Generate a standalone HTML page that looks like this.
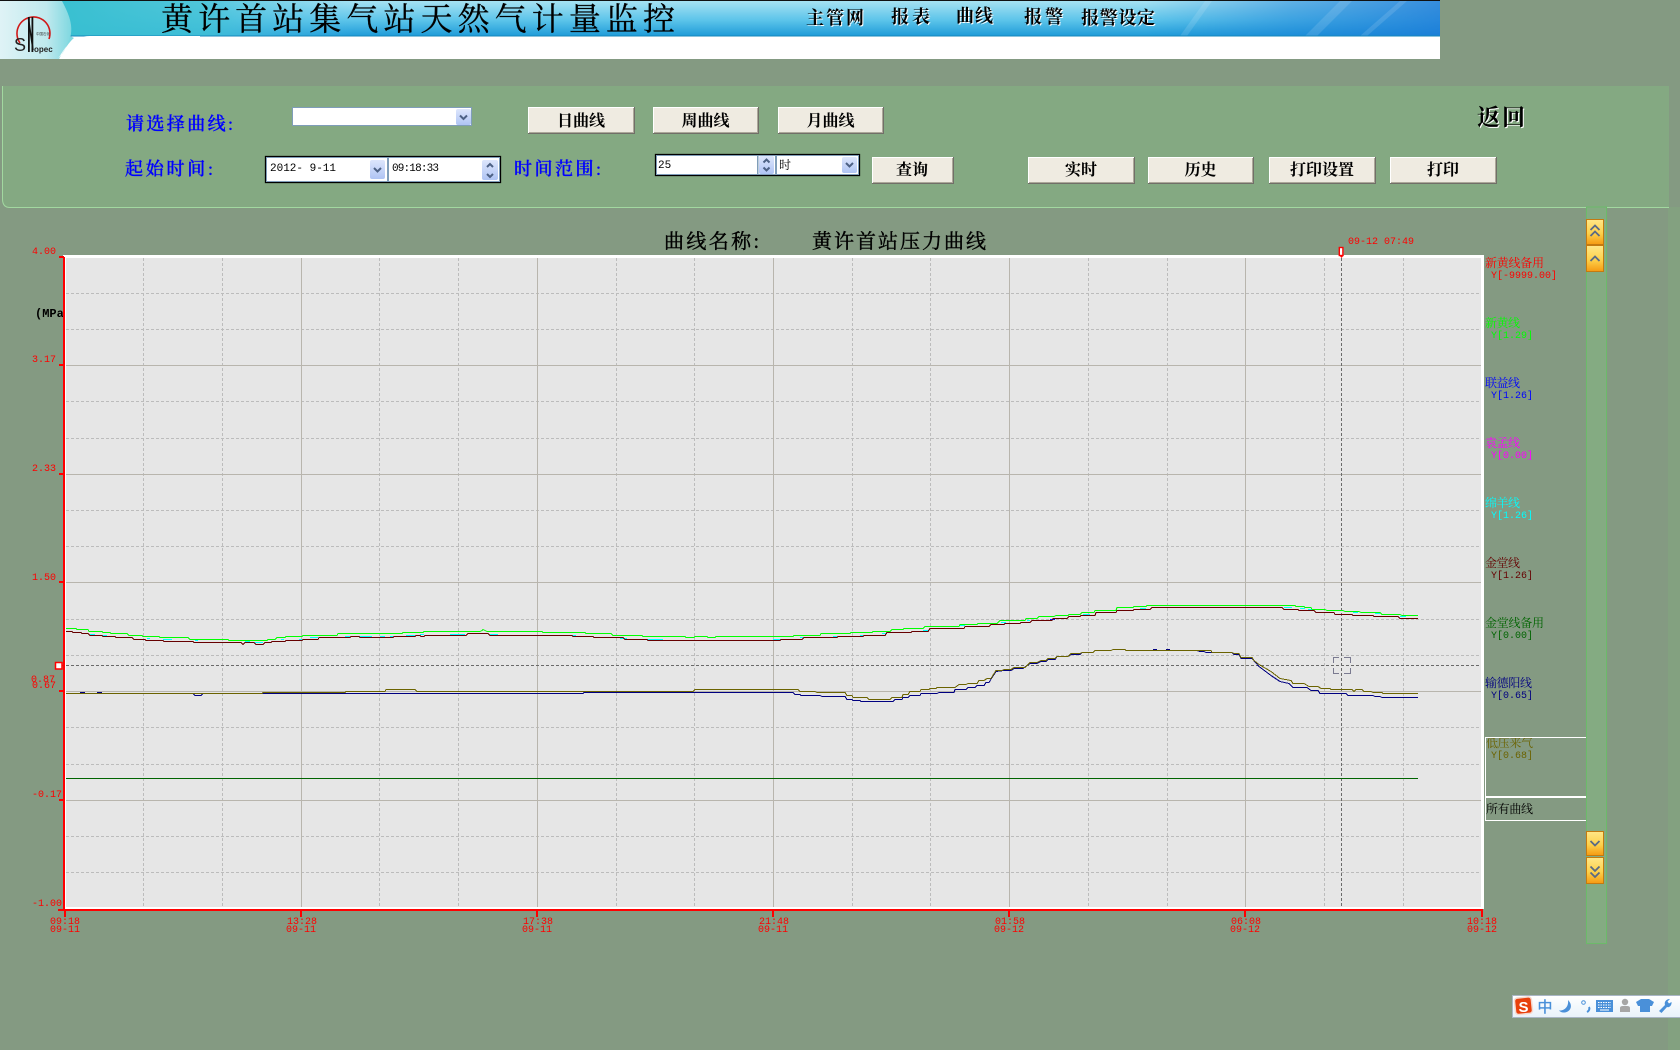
<!DOCTYPE html>
<html lang="zh"><head><meta charset="utf-8"><title>黄许首站压力曲线</title>
<style>
html,body{margin:0;padding:0;background:#849a82;width:1680px;height:1050px;overflow:hidden}
svg{position:absolute;left:0;top:0;display:block}
.cj{font-family:"Liberation Serif","Noto Serif CJK SC",serif}
.sn{font-family:"Liberation Sans","Noto Sans CJK SC",sans-serif}
.mo{font-family:"Liberation Mono",monospace;font-size:10px}
.lg{font-family:"Liberation Serif","Noto Serif CJK SC",serif;font-size:12px}
.btxt{font-family:"Liberation Serif","Noto Serif CJK SC",serif;font-weight:700;font-size:16px;fill:#000;text-anchor:middle}
.lab{font-family:"Liberation Serif","Noto Serif CJK SC",serif;font-size:18px;fill:#0000ff;font-weight:500;stroke:#0000ff;stroke-width:.35px}
polyline,path.c{fill:none;shape-rendering:crispEdges}
</style></head><body>
<svg width="1680" height="1050" viewBox="0 0 1680 1050" xmlns="http://www.w3.org/2000/svg">
<defs>
<linearGradient id="ban" x1="0" y1="0" x2="0" y2="1"><stop offset="0" stop-color="#a6e2f2"/><stop offset=".55" stop-color="#5cc4ea"/><stop offset="1" stop-color="#1e9bd8"/></linearGradient>
<linearGradient id="banR" x1="0" y1="0" x2="1" y2="0"><stop offset="0" stop-color="#fff" stop-opacity="0"/><stop offset=".6" stop-color="#1a80d8" stop-opacity="0"/><stop offset=".8" stop-color="#1a80d8" stop-opacity=".5"/><stop offset="1" stop-color="#1a78d8" stop-opacity=".8"/></linearGradient>
<linearGradient id="banL" x1="0" y1="0" x2="1" y2="0"><stop offset="0" stop-color="#dff3f6"/><stop offset=".65" stop-color="#c0e9ee"/><stop offset="1" stop-color="#7fd8e0"/></linearGradient>
<linearGradient id="teal" x1="0" y1="0" x2="1" y2="0"><stop offset="0" stop-color="#38bfd0"/><stop offset=".5" stop-color="#42c2d6" stop-opacity=".85"/><stop offset="1" stop-color="#5cc4ea" stop-opacity="0"/></linearGradient>
<linearGradient id="org" x1="0" y1="0" x2="0" y2="1"><stop offset="0" stop-color="#ffe788"/><stop offset=".55" stop-color="#fdd14c"/><stop offset="1" stop-color="#f59a12"/></linearGradient>
<linearGradient id="blu" x1="0" y1="0" x2="0" y2="1"><stop offset="0" stop-color="#dde6fc"/><stop offset="1" stop-color="#afc4f4"/></linearGradient>
<linearGradient id="try" x1="0" y1="0" x2="0" y2="1"><stop offset="0" stop-color="#fff"/><stop offset="1" stop-color="#e8f2fa"/></linearGradient>
</defs>

<!-- banner -->
<rect x="0" y="0" width="1440" height="59" fill="#fff"/>
<rect x="0" y="1" width="1440" height="35" fill="url(#ban)"/>
<rect x="700" y="1" width="740" height="35" fill="url(#banR)"/>
<rect x="55" y="1" width="300" height="35" fill="url(#teal)"/>
<path d="M1180 36L1205 1H1212L1187 36ZM1305 36L1340 1H1352L1317 36ZM1360 36L1400 1H1407L1367 36Z" fill="#fff" fill-opacity=".12"/>
<rect x="0" y="0" width="1440" height="1" fill="#111"/>
<rect x="0" y="35.500" width="1440" height="1" fill="#1587bb"/>
<path d="M0 1H62C72 20 78 36 58 59H0Z" fill="url(#banL)"/>
<path d="M58 59C66 46 72 36 90 36H200V59Z" fill="#fff"/>
<path d="M59 59C64 50 69 42 74 38L70 36C68 45 64 52 58 59Z" fill="#7fd8e0"/>
<path d="M20 43A16.500 16.500 0 1 1 49 39" fill="none" stroke="#d01818" stroke-width="1.600"/>
<rect x="28" y="17" width="1.800" height="35" fill="#111"/><rect x="31.500" y="17" width="1.800" height="35" fill="#111"/>
<path d="M28.500 19L33 50" stroke="#111" stroke-width="1.500"/>
<text x="14" y="51" class="sn" font-size="18" fill="#222">S</text>
<text x="34" y="52" class="sn" font-size="8" fill="#222" font-weight="700">opec</text>
<text x="36" y="35" class="sn" font-size="3.500" fill="#333">中国石化</text>
<text x="161" y="30" class="cj" font-size="32" fill="#000" stroke="#000" stroke-width=".3" textLength="514" lengthAdjust="spacing">黄许首站集气站天然气计量监控</text>
<g class="cj" font-size="18" font-weight="700" fill="#000">
<g fill="#fff" transform="translate(1 1)">
<text x="806" y="24" textLength="58">主管网</text><text x="891" y="23" textLength="39">报表</text><text x="956" y="22" textLength="37">曲线</text><text x="1024" y="23" textLength="39">报警</text><text x="1081" y="24" textLength="74">报警设定</text></g>
<text x="806" y="24" textLength="58">主管网</text><text x="891" y="23" textLength="39">报表</text><text x="956" y="22" textLength="37">曲线</text><text x="1024" y="23" textLength="39">报警</text><text x="1081" y="24" textLength="74">报警设定</text>
</g>

<!-- panel -->
<rect x="1668" y="207" width="12" height="843" fill="#83a180"/>
<path d="M2 86H1669V207H10Q2 207 2 199Z" fill="#84a982"/>
<path d="M2.500 86V199Q2.500 207.500 10 207.500H1669" fill="none" stroke="#a2d8a0" stroke-width="1"/>
<text x="126" y="130" class="lab" textLength="107">请选择曲线:</text>
<text x="125" y="175" class="lab" textLength="88">起始时间:</text>
<text x="514" y="175" class="lab" textLength="87">时间范围:</text>

<!-- combo 1 -->
<rect x="292.500" y="107.500" width="179" height="18" fill="#fff" stroke="#7f9db9"/>
<rect x="456" y="109" width="15" height="16" rx="2" fill="url(#blu)"/>
<path d="M460 115.500L463.500 119L467 115.500" fill="none" stroke="#4d6185" stroke-width="2"/>

<!-- date box -->
<rect x="265.500" y="156.500" width="235" height="26" fill="#fff" stroke="#000" stroke-width="1.300"/>
<rect x="266.500" y="157.500" width="233" height="24" fill="#fff" stroke="#7f9db9"/>
<rect x="387" y="157" width="2" height="25" fill="#7f9db9"/>
<text x="270" y="171" class="mo" fill="#000" style="font-size:11px" textLength="66">2012- 9-11</text>
<text x="392" y="171" class="mo" fill="#000" style="font-size:11px" textLength="47">09:18:33</text>
<rect x="370" y="160" width="15" height="19" rx="2" fill="url(#blu)"/>
<path d="M374 168L377.500 171.500L381 168" fill="none" stroke="#4d6185" stroke-width="2"/>
<rect x="482" y="160" width="16" height="20" rx="2" fill="url(#blu)"/>
<path d="M487 167L490 164L493 167M487 174L490 177L493 174" fill="none" stroke="#4d6185" stroke-width="2"/>

<!-- range box -->
<rect x="655.500" y="154.500" width="204" height="21" fill="#fff" stroke="#000" stroke-width="1.300"/>
<rect x="656.500" y="155.500" width="202" height="19" fill="#fff" stroke="#7f9db9"/>
<rect x="757" y="155" width="1.500" height="20" fill="#7f9db9"/><rect x="775" y="155" width="2" height="20" fill="#7f9db9"/>
<rect x="759" y="156" width="15" height="18" rx="2" fill="url(#blu)"/>
<path d="M763.500 162.500L766.500 159.500L769.500 162.500M763.500 167.500L766.500 170.500L769.500 167.500" fill="none" stroke="#4d6185" stroke-width="2"/>
<text x="658" y="168" class="mo" fill="#000" style="font-size:11px">25</text>
<text x="779" y="169" class="lg" fill="#000">时</text>
<rect x="842" y="157" width="15" height="16" rx="2" fill="url(#blu)"/>
<path d="M846 163L849.500 166.500L853 163" fill="none" stroke="#4d6185" stroke-width="2"/>

<!-- buttons -->
<g id="btns">
<g fill="#efebe1" stroke="none">
<rect x="528" y="107" width="106" height="27"/><rect x="653" y="107" width="105" height="27"/><rect x="778" y="107" width="105" height="27"/><rect x="872" y="157" width="81" height="27"/><rect x="1028" y="157" width="106" height="27"/><rect x="1148" y="157" width="105" height="27"/><rect x="1269" y="157" width="106" height="27"/><rect x="1390" y="157" width="106" height="27"/>
</g>
<path class="c" stroke="#fff" d="M528.500 133V107.500H634M653.500 133V107.500H758M778.500 133V107.500H883M872.500 183V157.500H953M1028.500 183V157.500H1134M1148.500 183V157.500H1253M1269.500 183V157.500H1375M1390.500 183V157.500H1496"/>
<path class="c" stroke="#aca899" d="M529 132.500H633.500V108M654 132.500H757.500V108M779 132.500H882.500V108M873 182.500H952.500V158M1029 182.500H1133.500V158M1149 182.500H1252.500V158M1270 182.500H1374.500V158M1391 182.500H1495.500V158"/>
<path class="c" stroke="#716f68" d="M528 133.500H634.500V107M653 133.500H758.500V107M778 133.500H883.500V107M872 183.500H953.500V157M1028 183.500H1134.500V157M1148 183.500H1253.500V157M1269 183.500H1375.500V157M1390 183.500H1496.500V157"/>
</g>
<text x="581" y="126" class="btxt">日曲线</text><text x="705.500" y="126" class="btxt">周曲线</text><text x="830.500" y="126" class="btxt">月曲线</text>
<text x="912" y="175" class="btxt">查询</text><text x="1081" y="175" class="btxt">实时</text><text x="1200.500" y="175" class="btxt">历史</text><text x="1322" y="175" class="btxt">打印设置</text><text x="1443" y="175" class="btxt">打印</text>
<g class="cj" font-size="23" font-weight="700">
<text x="1478" y="126" fill="#fff" textLength="48">返回</text>
<text x="1477" y="125" fill="#000" textLength="48">返回</text></g>

<!-- chart title -->
<text x="664" y="248" class="cj" font-size="20" fill="#000" stroke="#000" stroke-width=".4" textLength="95">曲线名称:</text>
<text x="812" y="248" class="cj" font-size="20" fill="#000" stroke="#000" stroke-width=".4" textLength="174">黄许首站压力曲线</text>

<!-- plot -->
<rect x="63" y="255" width="1421" height="654" fill="#fff"/>
<rect x="66" y="258" width="1415" height="649" fill="#e6e6e6"/>
<path class="c" stroke="#bcbcbc" stroke-dasharray="3 2" d="M143.500 258V907M222.500 258V907M379.500 258V907M458.500 258V907M616.500 258V907M694.500 258V907M852.500 258V907M930.500 258V907M1088.500 258V907M1167.500 258V907M1324.500 258V907M1403.500 258V907"/>
<path class="c" stroke="#bcbcbc" stroke-dasharray="3 2" d="M66 293.500H1479M66 329.500H1479M66 401.500H1479M66 438.500H1479M66 510.500H1479M66 546.500H1479M66 619.500H1479M66 655.500H1479M66 727.500H1479M66 764.500H1479M66 836.500H1479M66 872.500H1479"/>
<path class="c" stroke="#b8b5ad" d="M66 365.500H1481M66 474.500H1481M66 582.500H1481M66 691.500H1481M66 800.500H1481M301.500 258V907M537.500 258V907M773.500 258V907M1009.500 258V907M1245.500 258V907"/>
<path class="c" stroke="#6a6a6a" stroke-dasharray="3 2" d="M66 665.500H1481M1341.500 258V907"/>

<!-- curves -->
<path class="c" stroke="#00ffff" d="M90 634.500H95M102 635.500H107M135 635.500H138M147 638.500H150M163 639.500H172M195 640.500H198M245 641.500H250M255 642.500H263M281 639.500H284M299 639.500H302M310 637.500H318M345 636.500H350M359 636.500H372M380 636.500H385M390 636.500H393M406 635.500H415M420 634.500H424M450 634.500H465M490 634.500H498M572 635.500H576M620 638.500H627M647 639.500H663M773 639.500H782M800 637.500H805M833 636.500H837M860 635.500H863M882 633.500H887M894 632.500H905M923 630.500H928M937 628.500H948M960 625.500H965M1001 622.500H1006M1027 620.500H1030M1083 614.500H1090M1140 608.500H1146M1284 607.500H1292M1300 608.500H1305M1308 609.500H1313M1353 612.500H1358M1375 613.500H1380M1400 616.500H1406"/>
<path class="c" stroke="#0000ff" d="M972 626.500H977M1050 619.500H1055M1140 609.500H1146M493 635.500H496"/>
<polyline stroke="#00ff00" points="66,628.500 76,628.500 77,629.500 88,629.500 89,631.500 102,631.500 103,632.500 110,632.500 111,633.500 127,633.500 129,635.500 142,635.500 143,636.500 159,636.500 160,637.500 188,637.500 190,639.500 228,639.500 229,640.500 267,640.500 268,639.500 275,639.500 277,637.500 285,637.500 286,636.500 302,636.500 303,635.500 337,635.500 338,633.500 402,633.500 403,632.500 423,632.500 424,631.500 480,631.500 482,630.500 483,629.500 485,630.500 487,631.500 542,631.500 543,632.500 585,632.500 586,633.500 611,633.500 613,635.500 642,635.500 643,636.500 685,636.500 686,637.500 694,637.500 695,636.500 707,636.500 708,637.500 715,637.500 716,636.500 793,636.500 794,635.500 820,635.500 821,633.500 850,633.500 851,632.500 872,632.500 873,631.500 890,631.500 892,629.500 903,629.500 904,628.500 923,628.500 925,626.500 959,626.500 960,624.500 977,624.500 978,623.500 997,623.500 1000,620.500 1025,620.500 1026,618.500 1037,618.500 1039,616.500 1054,616.500 1056,615.500 1068,615.500 1069,614.500 1080,614.500 1082,612.500 1094,612.500 1095,610.500 1116,610.500 1117,607.500 1133,607.500 1134,606.500 1146,606.500 1147,605.500 1295,605.500 1296,606.500 1304,606.500 1305,607.500 1311,607.500 1312,609.500 1325,609.500 1327,610.500 1343,610.500 1345,611.500 1359,611.500 1361,612.500 1380,612.500 1382,614.500 1400,614.500 1402,615.500 1418,615.500"/>
<polyline stroke="#660000" points="66,631.500 72,631.500 73,632.500 81,632.500 82,633.500 88,633.500 90,635.500 102,635.500 103,636.500 115,636.500 116,637.500 132,637.500 134,639.500 145,639.500 146,640.500 163,640.500 164,641.500 193,641.500 194,642.500 241,642.500 243,644.500 245,642.500 254,642.500 256,644.500 263,644.500 265,642.500 271,642.500 272,641.500 285,641.500 286,640.500 302,640.500 303,639.500 318,639.500 319,637.500 350,637.500 351,636.500 359,636.500 360,637.500 393,637.500 394,636.500 415,636.500 416,635.500 420,635.500 421,636.500 424,636.500 425,635.500 466,635.500 468,633.500 488,633.500 490,635.500 572,635.500 573,636.500 593,636.500 594,637.500 623,637.500 625,639.500 647,639.500 648,640.500 780,640.500 781,639.500 802,639.500 804,637.500 837,637.500 838,636.500 863,636.500 864,635.500 885,635.500 887,632.500 911,632.500 912,631.500 928,631.500 930,628.500 964,628.500 965,626.500 989,626.500 991,624.500 1004,624.500 1005,623.500 1020,623.500 1021,622.500 1030,622.500 1032,620.500 1052,620.500 1053,618.500 1067,618.500 1069,616.500 1080,616.500 1081,615.500 1095,615.500 1096,612.500 1116,612.500 1117,610.500 1133,610.500 1134,609.500 1150,609.500 1152,607.500 1282,607.500 1284,609.500 1298,609.500 1299,610.500 1314,610.500 1316,612.500 1334,612.500 1335,614.500 1352,614.500 1353,615.500 1373,615.500 1374,616.500 1398,616.500 1400,618.500 1418,618.500"/>
<polyline stroke="#000080" points="66,693.500 193,693.500 195,695.500 201,695.500 203,693.500 583,693.500 584,692.500 793,692.500 795,694.500 800,694.500 801,695.500 820,695.500 822,696.500 845,696.500 847,699.500 852,699.500 853,700.500 860,700.500 861,701.500 893,701.500 895,699.500 902,699.500 903,697.500 908,697.500 910,695.500 920,695.500 921,693.500 937,693.500 939,692.500 954,692.500 955,689.500 966,689.500 968,687.500 975,687.500 977,685.500 984,685.500 986,682.500 989,682.500 992,677.500 996,671.500 1004,670.500 1011,670.500 1014,668.500 1023,668.500 1027,665.500 1030,663.500 1037,663.500 1041,661.500 1046,661.500 1048,659.500 1055,659.500 1057,656.500 1068,656.500 1071,654.500 1080,654.500 1082,652.500 1093,652.500 1095,650.500 1111,650.500 1113,649.500 1125,649.500 1126,650.500 1197,650.500 1200,651.500 1204,651.500 1206,652.500 1232,652.500 1234,654.500 1239,654.500 1241,658.500 1252,658.500 1259,666.500 1271,675.500 1280,681.500 1289,683.500 1293,687.500 1307,687.500 1311,690.500 1318,690.500 1320,693.500 1346,693.500 1348,695.500 1373,695.500 1375,696.500 1380,696.500 1382,697.500 1418,697.500"/>
<path class="c" stroke="#000080" d="M80 692.500H85M97 692.500H102M1153 649.500H1157M1166 649.500H1170M1199 651.500H1204"/>
<polyline stroke="#6b6300" points="66,693.500 262,693.500 263,692.500 345,692.500 346,691.500 385,691.500 386,689.500 415,689.500 417,691.500 693,691.500 695,689.500 798,689.500 800,691.500 815,691.500 817,692.500 845,692.500 847,695.500 852,695.500 853,697.500 867,697.500 869,699.500 890,699.500 892,697.500 902,697.500 903,694.500 908,694.500 910,691.500 920,691.500 921,689.500 929,689.500 930,688.500 936,688.500 937,687.500 955,687.500 959,684.500 966,684.500 968,683.500 977,683.500 979,680.500 984,680.500 987,678.500 991,678.500 996,670.500 1002,670.500 1004,669.500 1011,669.500 1014,667.500 1025,667.500 1027,665.500 1030,662.500 1037,662.500 1041,660.500 1046,660.500 1048,658.500 1055,658.500 1057,656.500 1068,656.500 1071,653.500 1080,653.500 1082,652.500 1093,652.500 1095,650.500 1111,650.500 1113,649.500 1125,649.500 1126,650.500 1211,650.500 1212,652.500 1232,652.500 1234,653.500 1239,653.500 1241,657.500 1252,657.500 1254,660.500 1259,664.500 1271,671.500 1280,678.500 1291,680.500 1293,683.500 1304,683.500 1309,686.500 1318,686.500 1321,688.500 1330,688.500 1331,689.500 1352,689.500 1354,691.500 1356,689.500 1362,689.500 1364,691.500 1371,691.500 1373,692.500 1382,692.500 1383,693.500 1418,693.500"/>
<path class="c" stroke="#006400" d="M66 778.500H1418"/>

<!-- cursor marker -->
<path class="c" stroke="#7a7a90" stroke-width="1" d="M1333.500 663V657.500H1339M1344 657.500H1350.500V663M1350.500 668V673.500H1344M1339 673.500H1333.500V668"/>

<!-- axes -->
<rect x="63" y="257" width="2" height="654" fill="#f00"/>
<rect x="58" y="909" width="1425" height="2" fill="#f00"/>
<rect x="1481" y="909" width="2" height="8" fill="#f00"/>
<g fill="#f00">
<rect x="59" y="256" width="5" height="2"/><rect x="59" y="364" width="5" height="2"/><rect x="59" y="473" width="5" height="2"/><rect x="59" y="581" width="5" height="2"/><rect x="59" y="690" width="5" height="2"/><rect x="59" y="799" width="5" height="2"/>
<rect x="64" y="909" width="2" height="8"/><rect x="300" y="909" width="2" height="8"/><rect x="536" y="909" width="2" height="8"/><rect x="772" y="909" width="2" height="8"/><rect x="1008" y="909" width="2" height="8"/><rect x="1244" y="909" width="2" height="8"/>
</g>
<rect x="55.500" y="662.500" width="6.500" height="6.500" fill="#fff" stroke="#f00" stroke-width="1.500"/>
<rect x="62" y="665" width="2" height="1" fill="#f00"/>
<rect x="1339.300" y="247.500" width="3.600" height="8" fill="#fff" stroke="#f00" stroke-width="1.400"/>
<path d="M1339 255H1344L1341.500 258Z" fill="#f00"/>

<!-- axis labels -->
<g class="mo" fill="#f00">
<text x="32" y="254">4.00</text><text x="32" y="362">3.17</text><text x="32" y="471">2.33</text><text x="32" y="580">1.50</text>
<text x="31" y="682">0.87</text><text x="32" y="688">0.67</text><text x="32" y="797">-0.17</text><text x="32" y="906">-1.00</text>
<text x="50" y="924">09:18</text><text x="50" y="932">09-11</text>
<text x="287" y="924">13:28</text><text x="286" y="932">09-11</text>
<text x="523" y="924">17:38</text><text x="522" y="932">09-11</text>
<text x="759" y="924">21:48</text><text x="758" y="932">09-11</text>
<text x="995" y="924">01:58</text><text x="994" y="932">09-12</text>
<text x="1231" y="924">06:08</text><text x="1230" y="932">09-12</text>
<text x="1467" y="924">10:18</text><text x="1467" y="932">09-12</text>
<text x="1348" y="244">09-12 07:49</text>
</g>
<svg x="30" y="300" width="33" height="26" overflow="hidden"><text x="5" y="17" font-family="Liberation Mono,monospace" font-weight="700" font-size="12" fill="#000">(MPa</text></svg>

<!-- legend -->
<g class="lg">
<text x="1485" y="267" fill="#f00" textLength="59">新黄线备用</text>
<text x="1485" y="327" fill="#0f0" textLength="35">新黄线</text>
<text x="1485" y="387" fill="#00f" textLength="35">联益线</text>
<text x="1485" y="447" fill="#f0f" textLength="35">袁孟线</text>
<text x="1485" y="507" fill="#0ff" textLength="35">绵羊线</text>
<text x="1485" y="567" fill="#660000" textLength="35">金堂线</text>
<text x="1485" y="627" fill="#006400" textLength="59">金堂线备用</text>
<text x="1485" y="687" fill="#000080" textLength="47">输德阳线</text>
<text x="1486" y="747" fill="#6b6300" textLength="47">低压来气</text>
<text x="1486" y="813" fill="#000" textLength="47">所有曲线</text>
</g>
<g class="mo">
<text x="1491" y="278" fill="#f00">Y[-9999.00]</text>
<text x="1491" y="338" fill="#0f0">Y[1.29]</text>
<text x="1491" y="398" fill="#00f">Y[1.26]</text>
<text x="1491" y="458" fill="#f0f">Y[0.00]</text>
<text x="1491" y="518" fill="#0ff">Y[1.26]</text>
<text x="1491" y="578" fill="#660000">Y[1.26]</text>
<text x="1491" y="638" fill="#006400">Y[0.00]</text>
<text x="1491" y="698" fill="#000080">Y[0.65]</text>
<text x="1491" y="758" fill="#6b6300">Y[0.68]</text>
</g>
<path class="c" stroke="#fff" d="M1586 737.500H1485.500V820.500H1586M1485 796.500H1586M1485 797.500H1586"/>

<!-- scroll strip -->
<rect x="1586.500" y="207" width="20" height="736.500" fill="#84ab82" stroke="#6cba6a"/>
<g stroke="#c47a10" fill="url(#org)">
<rect x="1586.500" y="219.500" width="17" height="25"/><rect x="1586.500" y="245.500" width="17" height="26"/>
<rect x="1586.500" y="831.500" width="17" height="24"/><rect x="1586.500" y="857.500" width="17" height="26"/>
</g>
<g fill="none" stroke="#5a6a85" stroke-width="1.800">
<path d="M1590.500 230L1595 225.500L1599.500 230M1590.500 236L1595 231.500L1599.500 236"/>
<path d="M1590.500 261L1595 256.500L1599.500 261"/>
<path d="M1590.500 841L1595 845.500L1599.500 841"/>
<path d="M1590.500 866.500L1595 871L1599.500 866.500M1590.500 872.500L1595 877L1599.500 872.500"/>
</g>

<!-- tray -->
<rect x="1512.500" y="995.500" width="168" height="22" fill="url(#try)" stroke="#a9b6c5"/>
<rect x="1515" y="997.500" width="17" height="16.500" rx="3" transform="rotate(-6 1523 1006)" fill="#e8400c" stroke="#f4d9d0" stroke-width="1.500"/>
<text x="1523.500" y="1012" font-family="Liberation Sans,sans-serif" font-weight="700" font-size="15" fill="#fff" text-anchor="middle">S</text>
<text x="1545" y="1012" class="sn" font-size="15" fill="#4a90d9" stroke="#4a90d9" stroke-width=".3" text-anchor="middle">中</text>
<path d="M1568 1000C1574 1006 1570 1013 1563 1012.500C1561 1012.300 1560 1011.500 1559 1010.500C1564 1011 1569 1007 1568 1000Z" fill="#4a90d9"/>
<circle cx="1583.500" cy="1002.500" r="1.800" fill="none" stroke="#4a90d9" stroke-width="1"/>
<path d="M1589 1007C1590 1009 1589 1011 1587 1012" fill="none" stroke="#4a90d9" stroke-width="2"/>
<rect x="1596" y="1000" width="17" height="12" fill="#4a90d9"/>
<path d="M1598 1002.500H1611M1598 1005H1611M1598 1007.500H1611" stroke="#fff" stroke-width="1" stroke-dasharray="1.500 1"/>
<path d="M1600 1010H1609" stroke="#fff" stroke-width="1"/>
<circle cx="1625" cy="1002" r="3.200" fill="#a6a6a6"/>
<path d="M1620 1012V1008Q1620 1006 1623 1006H1627Q1630 1006 1630 1008V1012Z" fill="#a6a6a6"/>
<path d="M1641 999H1649L1654 1002L1652 1006H1650V1012H1640V1006H1638L1636 1002Z" fill="#4a90d9"/>
<path d="M1659 1011L1665 1005C1664 1002 1666 999 1670 999L1667.500 1001.500L1669 1003.500L1671.500 1002C1672 1005 1669.500 1008 1667 1007L1661.500 1013Z" fill="#4a90d9"/>
</svg>
</body></html>
